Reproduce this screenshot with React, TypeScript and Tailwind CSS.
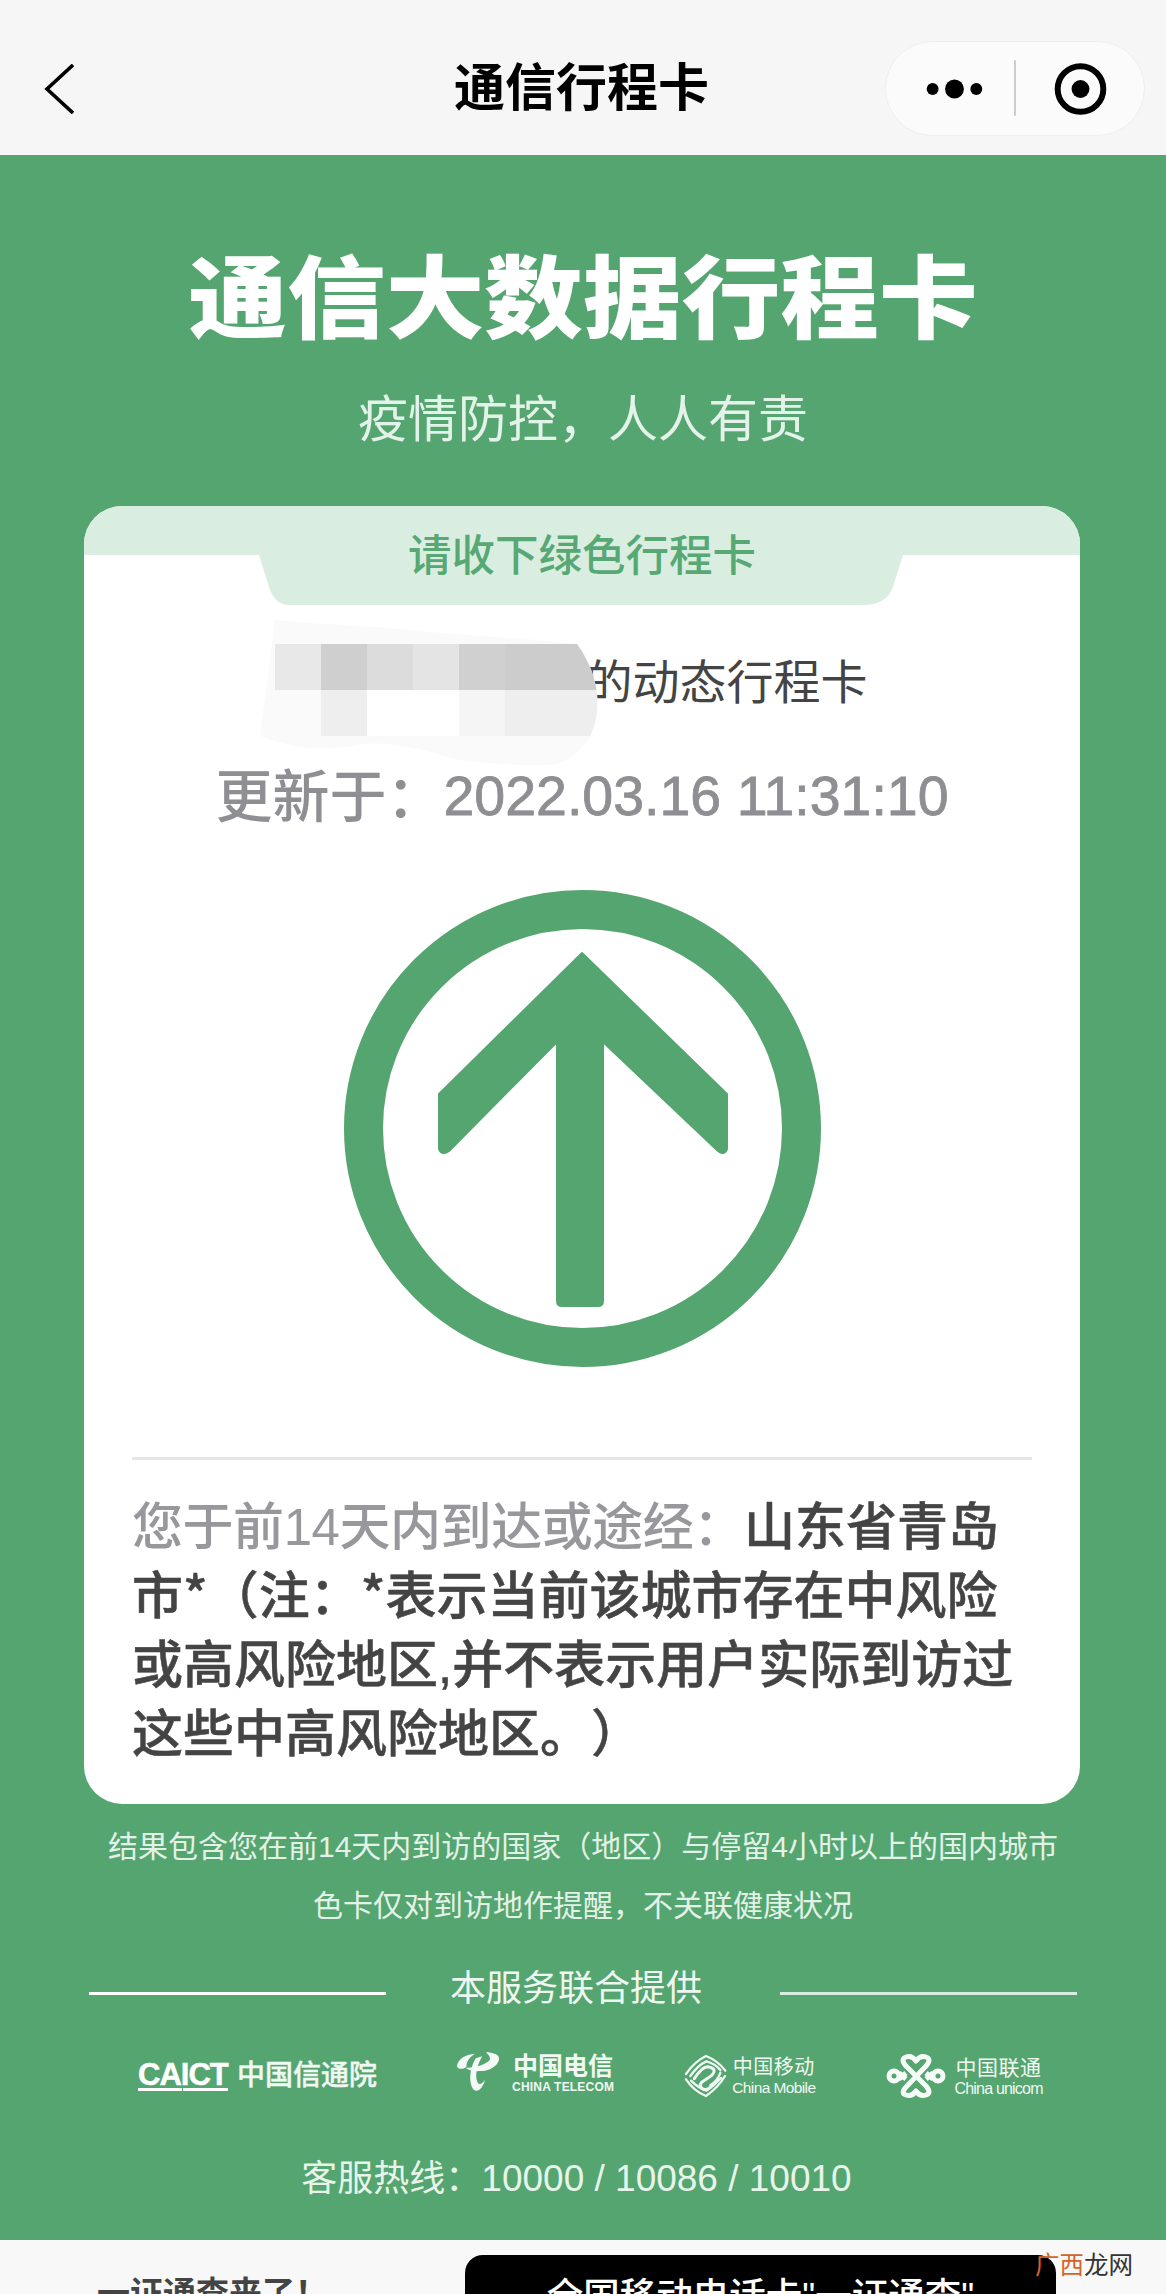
const FONT = "font-['Liberation_Sans','Noto_Sans_CJK_SC',sans-serif]";

function NavBar() {
  return (
    <header className="grid h-[155px] grid-cols-[1fr_auto_1fr] items-center bg-[#f6f6f6] pt-[22px]">
      <div className="pl-[44px]">
        <svg viewBox="0 0 30 50" className="h-[50px] w-[30px]" fill="none" stroke="#000" strokeWidth="3.6">
          <path d="M29 1 L3 25 L29 49" />
        </svg>
      </div>
      <h1 className="mr-[3px] text-[51px] font-bold leading-none text-black">通信行程卡</h1>
      <div className="flex justify-end pr-[21px]">
        <div className="flex h-[95px] w-[260px] items-center rounded-full border border-[#eeeeee] bg-[#fbfbfb]">
          <svg viewBox="0 0 260 95" className="h-[95px] w-[260px]">
            <circle cx="47" cy="48" r="6" fill="#000" />
            <circle cx="69" cy="48" r="9.5" fill="#000" />
            <circle cx="91" cy="48" r="6" fill="#000" />
            <line x1="130" y1="19" x2="130" y2="75" stroke="#bdbdbd" strokeWidth="1.5" />
            <circle cx="196" cy="48" r="23" fill="none" stroke="#000" strokeWidth="6" />
            <circle cx="196" cy="48" r="9" fill="#000" />
          </svg>
        </div>
      </div>
    </header>
  );
}

function NameMosaic() {
  const rows = [
    ['#e8e8e8', '#cfcfcf', '#dcdcdc', '#e4e4e4', '#d0d0d0', '#cccccc', '#cccccc'],
    ['#fafafa', '#eeeeee', '#ffffff', '#ffffff', '#f5f5f5', '#eeeeee', '#eeeeee'],
  ];
  return (
    <svg viewBox="0 0 350 150" className="absolute left-[176px] top-[-32px] h-[150px] w-[350px]">
      <path
        d="M15 0 C60 4 100 6 131 8 C180 14 240 16 317 24 C336 50 345 85 330 116 C322 132 305 146 284 145 C250 146 220 142 198 140 C160 128 130 122 105 124 C85 128 60 130 39 127 C25 124 10 120 0 116 Z"
        fill="#fafafa"
      />
      <defs>
        <clipPath id="mosaic-clip">
          <path d="M15 24 L317 24 C336 50 345 85 330 116 L15 116 Z" />
        </clipPath>
      </defs>
      <g clipPath="url(#mosaic-clip)">
        {rows.map((row, r) =>
          row.map((fill, c) => (
            <rect key={`${r}-${c}`} x={15 + c * 46} y={24 + r * 46} width="46.5" height="46.5" fill={fill} />
          )),
        )}
      </g>
    </svg>
  );
}

function ArrowBadge() {
  return (
    <svg viewBox="0 0 477 477" className="h-[477px] w-[477px]">
      <circle cx="238.5" cy="238.5" r="219" fill="none" stroke="#55a570" strokeWidth="39" />
      <path
        d="M238 63 L383 204 V259 Q380 266 374 261 L259 152 V411 Q259 416 254 416 H218 Q213 416 213 411 V152 L105 261 Q98 266 95 259 V204 Z"
        fill="#55a570"
        stroke="#55a570"
        strokeLinejoin="round"
        strokeWidth="2"
      />
    </svg>
  );
}

function TravelCard() {
  return (
    <section className="ml-[84px] h-[1298px] w-[996px] overflow-hidden rounded-[38px] bg-white">
      <div className="relative h-[99px]">
        <div className="h-[49px] bg-[#d9eee0]" />
        <svg viewBox="0 0 644 50" className="absolute left-[175px] top-[49px] h-[50px] w-[644px]">
          <path d="M0 0 H644 L634 32 Q628 50 603 50 H30 Q16 50 10 32 Z" fill="#d9eee0" />
        </svg>
        <div className="absolute inset-0 flex items-center justify-center pt-[3px] text-[43.5px] font-medium leading-none text-[#57a875]">
          请收下绿色行程卡
        </div>
      </div>

      <div className="relative mt-[47px] flex h-[60px] items-center justify-center text-[47px] leading-none text-[#444444]">
        <span className="w-[289px]" />
        <span>的动态行程卡</span>
        <NameMosaic />
      </div>

      <div className="mt-[55px] flex h-[60px] items-center justify-center text-[57px] font-medium leading-none text-[#8e8e93]">
        更新于：
        <span className="text-[55.5px] [-webkit-text-stroke:0.8px_#8e8e93]">2022.03.16 11:31:10</span>
      </div>

      <div className="mt-[63px] flex justify-center">
        <ArrowBadge />
      </div>

      <div className="mx-[48px] mt-[90px] h-[3px] bg-[#e6e6e6]" />

      <p className="mt-[33px] px-[48px] text-[51px] font-medium leading-[69px] text-[#444444] [-webkit-text-stroke:0.5px_#444444] [text-spacing-trim:space-all]">
        <span className="tracking-[-0.45px] text-[#98989c] [-webkit-text-stroke:0px]">您于前14天内到达或途经：</span>
        山东省青岛
        <br />
        市<span className="font-['Noto_Sans_CJK_SC'] leading-none">*</span>（注：<span className="font-['Noto_Sans_CJK_SC'] leading-none">*</span>表示当前该城市存在中风险
        <br />
        或高风险地区,并不表示用户实际到访过
        <br />
        这些中高风险地区。）
      </p>
    </section>
  );
}

function TelecomLogo() {
  return (
    <div className="flex items-start">
      <svg viewBox="0 0 180 162" className="ml-[-7px] mt-[-8px] h-[54px] w-[60px]">
        <path d="M24 62 C28 40 50 28 78 26 C62 36 52 48 52 66 C40 74 26 74 24 62 Z" fill="#f4faf6" />
        <path d="M110 22 C130 22 154 28 150 44 C146 64 118 80 90 78 C72 80 58 76 50 68 C72 70 104 62 122 46 C126 38 118 28 110 22 Z" fill="#f4faf6" />
        <path d="M80 40 C62 70 58 110 72 132 C84 146 102 130 108 104 C100 118 88 122 84 108 C78 90 84 60 100 34 Z" fill="#f4faf6" />
      </svg>
      <div className="ml-[3px] flex flex-col items-center">
        <span className="text-[25px] font-bold leading-[26px]">中国电信</span>
        <span className="mt-[1px] text-[12px] font-bold leading-[14px] tracking-[0.2px]">CHINA TELECOM</span>
      </div>
    </div>
  );
}

function MobileLogo() {
  return (
    <div className="flex items-center">
      <svg
        viewBox="0 0 150 156"
        className="mx-[-5px] h-[52px] w-[50px]"
        fill="none"
        stroke="#f0f8f3"
        strokeLinecap="round"
        strokeWidth="7"
      >
        <path d="M15 72 C30 50 50 30 75 18 C95 26 118 42 133 62" />
        <path d="M28 78 C42 58 58 42 76 34 C92 38 108 48 118 60" />
        <path d="M40 86 C50 70 65 50 80 50 C95 52 108 60 92 76 C75 90 55 95 58 108 C62 120 78 122 88 112" strokeWidth="9" />
        <path d="M118 68 C112 88 98 100 88 106" />
        <path d="M132 78 C118 102 98 122 75 138 C50 128 30 110 15 88" />
        <path d="M120 84 C106 100 92 112 76 122 C58 116 42 104 30 92" />
      </svg>
      <div className="ml-[6px] flex flex-col items-center">
        <span className="text-[20px] leading-[24px] tracking-[0.5px]">中国移动</span>
        <span className="text-[15.5px] leading-[18px] tracking-[-0.6px]">China Mobile</span>
      </div>
    </div>
  );
}

function UnicomLogo() {
  return (
    <div className="flex items-center">
      <svg viewBox="0 0 60 46" className="h-[46px] w-[60px]" fill="none" stroke="#f6fbf8" strokeWidth="5" strokeLinejoin="round">
        <path d="M30 23 L20 13 Q14 6 20 4 Q26 2 30 8 Q34 2 40 4 Q46 6 40 13 L21 33 Q14 40 20 42 Q26 44 30 38 Q34 44 40 42 Q46 40 40 33 Z" />
        <circle cx="8" cy="23" r="5" />
        <circle cx="52" cy="23" r="5" />
        <path d="M13 20 L20 26 M13 26 L20 20 M47 20 L40 26 M47 26 L40 20" />
      </svg>
      <div className="ml-[8px] flex flex-col items-center">
        <span className="text-[21px] leading-[25px] tracking-[0.5px]">中国联通</span>
        <span className="text-[16px] leading-[18px] tracking-[-0.8px]">China unicom</span>
      </div>
    </div>
  );
}

function ProviderLogos() {
  return (
    <div className="ml-[138px] mt-[42px] flex h-[46px] items-center text-[#f0f8f3]">
      <div className="flex items-center">
        <div className="flex flex-col">
          <span className="text-[31px] font-bold leading-[25px] tracking-[-1px] text-white [-webkit-text-stroke:0.5px_#ffffff]">CAICT</span>
          <div className="mt-[1px] flex gap-[1px]">
            <span className="h-[3px] w-[44px] bg-white" />
            <span className="h-[3px] w-[45px] bg-white" />
          </div>
        </div>
        <span className="ml-[9px] text-[28px] font-medium leading-none [-webkit-text-stroke:0.4px_#f0f8f3]">中国信通院</span>
      </div>
      <div className="ml-[79px]">
        <TelecomLogo />
      </div>
      <div className="ml-[72px]">
        <MobileLogo />
      </div>
      <div className="ml-[71px]">
        <UnicomLogo />
      </div>
    </div>
  );
}

function GreenPanel() {
  return (
    <main className="h-[2085px] bg-[#55a570] pt-[94px]">
      <h2 className="flex h-[101px] items-center justify-center text-white">
        <span className="scale-x-[1.096] text-[90px] font-black leading-none">通信大数据行程卡</span>
      </h2>
      <p className="mt-[45px] text-center text-[50px] leading-[50px] text-[#e4f3e9]">疫情防控，人人有责</p>
      <div className="mt-[61px]">
        <TravelCard />
      </div>
      <div className="mt-[13px] text-center text-[30px] leading-[59px] text-[#e3f2e8]">
        <p>结果包含您在前14天内到访的国家（地区）与停留4小时以上的国内城市</p>
        <p>色卡仅对到访地作提醒，不关联健康状况</p>
      </div>
      <div className="mt-[32px] flex items-center px-[89px]">
        <span className="mt-[8px] h-[3px] w-[297px] bg-white" />
        <span className="flex-1 pr-[14px] text-center text-[36px] leading-[44px] text-[#eef7f1]">本服务联合提供</span>
        <span className="mt-[8px] h-[3px] w-[297px] bg-[#d8eddf]" />
      </div>
      <ProviderLogos />
      <p className="mt-[58px] pr-[13px] text-center text-[36px] leading-[44px] text-[#e6f4ea]">
        客服热线：<span className="text-[37px]">10000 / 10086 / 10010</span>
      </p>
    </main>
  );
}

function BottomStrip() {
  return (
    <footer className="relative flex h-[54px] items-start overflow-hidden bg-[#f8f8f8]">
      <div className="ml-[97px] mt-[37px] text-[33px] font-bold leading-none text-[#444444]">一证通查来了！</div>
      <div className="ml-auto mr-[110px] mt-[15px] flex h-[60px] w-[591px] justify-center rounded-t-[18px] bg-black pt-[24px] text-[36.5px] font-medium leading-none text-white">
        全国移动电话卡"一证通查"
      </div>
      <div className="absolute left-[1035px] top-[14px] text-[24.5px] leading-none text-[#333333]">
        <span className="text-[#d9622b]">广西</span>龙网
      </div>
    </footer>
  );
}

export default function App() {
  return (
    <div lang="zh-CN" className={`${FONT} h-[2294px] w-[1166px] overflow-hidden bg-white`}>
      <NavBar />
      <GreenPanel />
      <BottomStrip />
    </div>
  );
}
